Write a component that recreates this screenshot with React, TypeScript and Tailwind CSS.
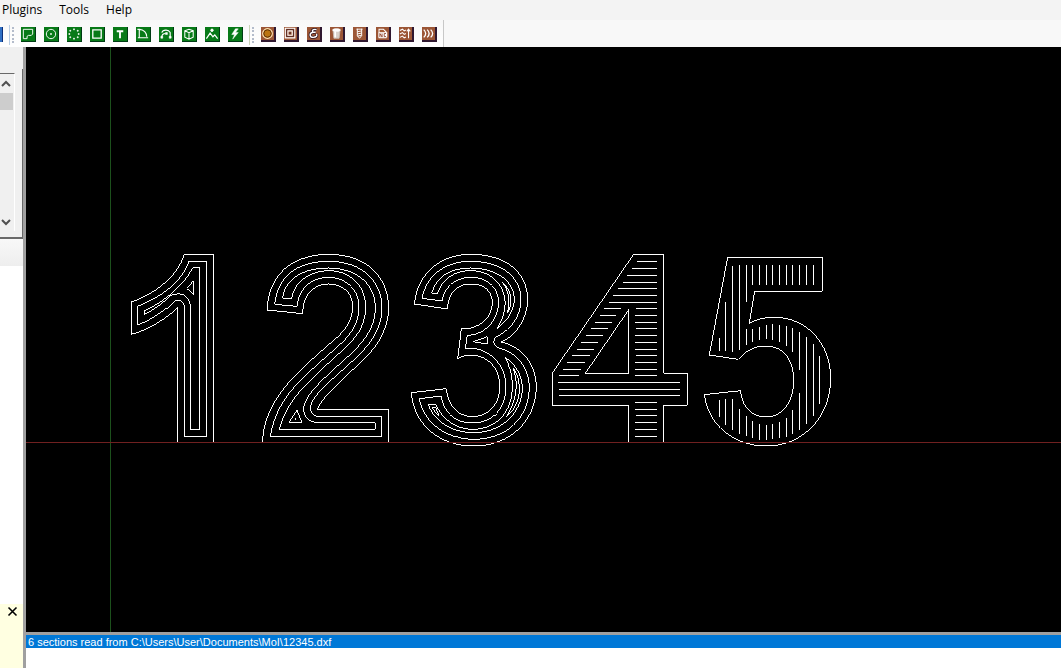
import * as React from "react";

const GREEN_TOOLS: { label: string; icon: React.ReactNode }[] = [
  { label: "Polyline", icon: <path d="M2.5 2.5h10v5l-1.5 1.5h-3l-1.5 1v2.5h-4z" /> },
  {
    label: "Circle",
    icon: (
      <>
        <circle cx="7.5" cy="7.5" r="5" />
        <path d="M7 7h1v1H7z" />
      </>
    ),
  },
  {
    label: "Point list",
    icon: (
      <path
        d="M7 2h1v1H7zM11 3.5h1v1h-1zM12 7h1v1h-1zM11 10.5h1v1h-1zM7 12h1v1H7zM3 10.5h1v1H3zM2 7h1v1H2zM3 3.5h1v1H3z"
        fill="white"
        strokeWidth="0.8"
      />
    ),
  },
  { label: "Rectangle", icon: <path d="M3 3h9v9H3z" strokeWidth="1.4" /> },
  { label: "Text", icon: <path d="M4 4.5h7M7.5 4.5V12" strokeWidth="2" /> },
  { label: "Region", icon: <path d="M3.5 12V2.5c5 0 8 4 8 8M2 11.5h11M1.5 2.5h3" strokeWidth="1.2" /> },
  {
    label: "Arc",
    icon: (
      <>
        <path d="M3 6c1-3 7-4 9 0v5M3 11c0-3 2-4 4-4" strokeWidth="1.2" />
        <path d="M2 10h2v2H2zM7 6h2v2H7zM11 10h2v2h-2z" fill="white" strokeWidth="0.6" />
      </>
    ),
  },
  { label: "Surface", icon: <path d="M3 4l4.5-1.5L12 4v7l-4.5 2L3 11zM3 4l4.5 2L12 4M7.5 6v7" strokeWidth="1.1" /> },
  {
    label: "Bitmap",
    icon: (
      <>
        <path d="M1.5 12.5l4-6 3 4 2-2 3 4" strokeWidth="1.3" />
        <circle cx="7.5" cy="3.5" r="1.3" fill="white" />
      </>
    ),
  },
  { label: "Script", icon: <path d="M8 2L4 8h3l-2 5 6-7H8l3-4z" fill="white" strokeWidth="0.5" /> },
];

const BROWN_TOOLS: { label: string; icon: React.ReactNode }[] = [
  {
    label: "Profile",
    icon: (
      <>
        <circle cx="7.5" cy="7.5" r="5.6" stroke="#ffe6b0" strokeWidth="1.3" />
        <circle cx="7.5" cy="7.5" r="4.2" fill="#bb7412" stroke="#5a3000" />
      </>
    ),
  },
  {
    label: "Pocket",
    icon: (
      <>
        <path d="M1.5 1.5h11v11h-11zM4.5 4.5h5v5h-5z" strokeWidth="1.3" />
        <path d="M3 3h8v8H3zM6.5 6.5h1v1h-1z" stroke="#4a2020" strokeWidth="0.9" />
      </>
    ),
  },
  {
    label: "Engrave",
    icon: (
      <>
        <path d="M11 3c-4-1-6 1-4 3h3H7c-5 1-4 6 0 6 4 0 5-2 4-4" stroke="#2c1420" strokeWidth="3.4" />
        <path d="M11 3c-4-1-6 1-4 3h3H7c-5 1-4 6 0 6 4 0 5-2 4-4" strokeWidth="1.6" />
      </>
    ),
  },
  {
    label: "3D Profile",
    icon: (
      <>
        <path d="M3.5 4l1 9h6l1-9z" fill="#d9d2cb" stroke="#c9beb6" />
        <path d="M6 5v7" stroke="#fff" strokeWidth="2" />
        <ellipse cx="7.5" cy="3.5" rx="4.5" ry="1.5" fill="#fff" />
      </>
    ),
  },
  { label: "Drill", icon: <path d="M4 2.5h7M5 2v8l2.5 3 2.5-3V2M5 5.5l5-1M5 8l5-1M5 10.5l5-1" strokeWidth="1.1" /> },
  {
    label: "NC File",
    icon: (
      <>
        <path d="M3.5 2.5h5l3 3v7h-8z" fill="#a35a34" strokeWidth="1.2" />
        <path d="M3 6h10v6H3z" fill="white" stroke="none" />
        <path d="M4.5 11.5v-4l2.5 4v-4M11.5 7.5h-2v3.5h2" stroke="#8a3c24" />
      </>
    ),
  },
  {
    label: "Lathe",
    icon: <path d="M1 4l3-1.5 2 2 2-1M1 8l3-1.5 2 2 2-1M1 12l3-1.5 2 2 2-1M11 13V3M9 5l2-2.5L13 5" strokeWidth="1.2" />,
  },
  { label: "V-Engrave", icon: <path d="M2 3c3 3 3 6 0 9M6 3c3 3 3 6 0 9M10 3c3 3 3 6 0 9" strokeWidth="1.5" /> },
];

// Hatch segments, each [from, to, position] in drawing units (three to a pixel)
const FOUR_HATCH = [
  [276, 336, 50], [262, 336, 71], [247, 336, 91], [235, 336, 112], [220, 336, 130],
  [205, 336, 152], [192, 336, 172], [178, 228, 190], [273, 336, 190], [165, 213, 211],
  [270, 336, 211], [150, 201, 232], [270, 336, 232], [138, 189, 252], [273, 336, 252],
  [124, 174, 271], [270, 336, 271], [109, 159, 292], [270, 336, 292], [97, 147, 313],
  [270, 336, 313], [82, 135, 331], [273, 336, 331], [67, 120, 352], [270, 336, 352],
  [54, 108, 373], [270, 336, 373], [42, 102, 391], [270, 336, 391], [39, 405, 412],
  [42, 405, 433], [42, 405, 453], [270, 336, 472], [270, 336, 493], [273, 336, 513],
  [270, 336, 532], [270, 336, 553], [270, 336, 574],
];

const FIVE_HATCH = [
  [279, 318, 73], [171, 318, 93], [63, 321, 112], [60, 315, 133], [60, 171, 154],
  [60, 120, 172], [60, 120, 193], [60, 120, 214], [60, 120, 232], [60, 120, 253],
  [60, 120, 274], [60, 120, 294], [60, 120, 313], [60, 120, 334], [60, 120, 355],
  [252, 300, 154], [252, 291, 172], [246, 285, 193], [240, 282, 214], [237, 285, 232],
  [240, 291, 253], [243, 303, 274], [249, 321, 294], [261, 375, 313], [276, 537, 334],
  [297, 513, 355], [333, 477, 373], [465, 516, 73], [462, 540, 93], [462, 555, 112],
  [492, 567, 133], [513, 573, 154], [528, 579, 172], [537, 585, 193], [540, 585, 214],
  [537, 582, 232], [531, 579, 253], [519, 576, 274], [495, 567, 294], [444, 555, 313],
];

const MENU = ["Plugins", "Tools", "Help"];

export default function App() {
  return (
    <div className="flex h-screen flex-col overflow-hidden bg-[#f0f0f0] font-['Open_Sans','Noto_Sans',sans-serif] text-xs text-black">
      <nav className="flex h-5 shrink-0 items-center gap-[17px] bg-[#f3f3f3] pl-[2px]">
        {MENU.map((item) => (
          <button key={item} type="button" className="leading-5">
            {item}
          </button>
        ))}
      </nav>

      <Toolbar />

      <div className="flex min-h-0 flex-1">
        <SidePanel />
        <main className="flex min-w-0 flex-1 flex-col">
          <Viewport />
          <div className="h-[3px] shrink-0 bg-[#a0a0a0]" />
          <div className="h-[33px] shrink-0 bg-white">
            <p className="h-[13px] bg-[#0078d7] pl-[2px] font-['Liberation_Sans',sans-serif] text-[11px] leading-[14px] whitespace-nowrap text-white">
              6 sections read from C:\Users\User\Documents\MoI\12345.dxf
            </p>
          </div>
        </main>
      </div>
    </div>
  );
}

function Toolbar() {
  return (
    <div className="flex h-[27px] shrink-0 items-center bg-[#f8f8f8]">
      <div className="flex h-full w-[444px] items-center border-r border-[#c8c8c8] bg-linear-to-b from-[#f8f8f8] to-white pt-[2px]">
        <button type="button" aria-label="Layers" className="h-[15px] w-[3px] border-r border-[#0c2f78] bg-[#2f6fc4]" />
        <div className="ml-[6px] h-5 border-l border-[#b8cce4]" />
        <Grip />
        <div className="ml-[7px] flex gap-2">
          {GREEN_TOOLS.map((tool) => (
            <button
              key={tool.label}
              type="button"
              aria-label={tool.label}
              className="size-[15px] border-r border-b border-[#003c14] bg-[#087a18]"
            >
              <Glyph>{tool.icon}</Glyph>
            </button>
          ))}
        </div>
        <div className="ml-[6px] h-5 border-l border-[#c9d3b8]" />
        <Grip />
        <div className="ml-[7px] flex gap-2">
          {BROWN_TOOLS.map((tool) => (
            <button
              key={tool.label}
              type="button"
              aria-label={tool.label}
              className="size-[15px] border-r-2 border-b-2 border-[#301830] bg-[#9c5636]"
            >
              <Glyph>{tool.icon}</Glyph>
            </button>
          ))}
        </div>
      </div>
    </div>
  );
}

function Grip() {
  return <div className="ml-[2px] h-4 border-l-2 border-dotted border-[#b4bccb]" />;
}

function Glyph({ children }: { children: React.ReactNode }) {
  return (
    <svg viewBox="0 0 15 15" className="block size-full" fill="none" stroke="white" aria-hidden="true">
      {children}
    </svg>
  );
}

function SidePanel() {
  return (
    <aside className="flex w-[26px] shrink-0 flex-col border-r-[3px] border-[#a0a0a0] bg-white">
      <div className="h-[22px] shrink-0 bg-[#f0f0f0]" />
      <div className="flex h-[170px] shrink-0 border-r border-b-2 border-[#696969] bg-[#f0f0f0] pt-1 pb-[6px]">
        <div className="flex w-[15px] flex-col items-start border-t border-r border-t-[#696969] border-r-white">
          <button type="button" aria-label="Scroll up" className="h-[19px] w-3">
            <Chevron d="M2 12l4-4 4 4" />
          </button>
          <div className="h-[17px] w-[13px] bg-[#cdcdcd]" />
          <div className="flex-1" />
          <button type="button" aria-label="Scroll down" className="h-[19px] w-3">
            <Chevron d="M2 8l4 4 4-4" />
          </button>
        </div>
      </div>
      <div className="h-[27px] shrink-0 bg-linear-to-b from-[#f8f8f8] to-[#eeeeee]" />
      <div className="flex-1" />
      <div className="flex h-16 shrink-0 items-start justify-end bg-[#ffffe1] pt-[2px] pr-[5px]">
        <button type="button" aria-label="Close" className="size-[11px]">
          <svg viewBox="0 0 11 11" className="size-full" stroke="black" strokeWidth="1.6" aria-hidden="true">
            <path d="M1.5 1.5l8 8M9.500 1.500l-8 8" />
          </svg>
        </button>
      </div>
    </aside>
  );
}

function Chevron({ d }: { d: string }) {
  return (
    <svg viewBox="0 0 12 19" className="size-full" fill="none" stroke="#505050" strokeWidth="2" aria-hidden="true">
      <path d={d} />
    </svg>
  );
}

// Drawing area: axes plus the toolpaths of the five shapes
function Viewport() {
  return (
    <div className="min-h-0 flex-1 bg-black">
      <svg
        className="block size-full"
        fill="none"
        stroke="white"
        strokeWidth="3"
        shapeRendering="crispEdges"
        role="img"
        aria-label="12345.dxf toolpaths"
      >
        <path d="M84.5 0V2000" stroke="#1c501c" strokeWidth="1" />

        <g transform="translate(94 198) scale(0.33333)">
          <path d="M173 592V188C140 220 85 255 34 268V171C110 145 175 90 193 28H281V592" />
          <path d="M52 184C115 160 185 115 207 49H260V574H193V190C193 165 175 160 160 172C130 198 95 225 52 240Z" />
          <path d="M73 197C120 178 190 125 218 69H240V553H211V185C208 148 180 140 152 152C130 172 110 190 73 208Z" />
          <path d="M221 107V148L200 130Z" />
        </g>

        <g transform="translate(232 198) scale(0.33333)">
          <path d="M14 592C14 540 35 480 90 415C150 350 200 310 240 275C270 245 285 220 284 180C282 140 250 117 212 117C165 118 135 150 134 206L27 195C32 90 100 28 212 28C325 28 392 95 392 190C390 265 345 320 300 360C250 405 195 455 177 493H392V592" />
          <path d="M37 574C45 525 65 475 110 425C160 370 225 320 260 285C290 252 303 225 303 180C300 130 260 97 212 97C155 98 122 135 117 184L50 178C58 100 110 49 212 49C315 49 372 110 372 190C370 260 330 305 287 345C230 398 160 450 157 488C157 502 165 514 180 514H371V574Z" />
          <path d="M64 553C75 510 95 475 125 440C175 383 235 335 270 300C305 265 323 235 323 180C320 120 275 77 212 77C150 78 108 115 101 160H74C80 105 130 69 212 69C300 70 352 120 352 188C352 250 315 292 275 330C215 385 140 445 137 490C137 515 155 533 180 533H352V553Z" />
          <path d="M117 496L132 532H93ZM113 520V525" />
        </g>

        <g transform="translate(379 198) scale(0.33333)">
          <path d="M28 177C38 85 105 28 198 28C300 28 368 80 368 165C366 225 330 275 287 291C355 305 394 360 394 430C390 530 315 603 205 603C100 603 25 535 19 443L124 431C130 485 160 515 205 515C250 513 284 480 284 425C284 365 245 330 195 330C180 331 170 335 158 341L169 251C230 252 262 215 262 170C260 140 240 117 198 117C155 117 130 145 127 192Z" />
          <path d="M51 160C65 90 120 49 198 49C290 50 348 95 348 165C346 215 320 250 280 273C262 280 262 300 280 308C340 325 372 370 373 430C370 520 305 583 205 583C120 582 55 530 43 461L108 453C118 505 150 534 205 534C262 533 303 490 303 425C302 360 255 310 195 310H181L187 271C240 270 281 225 281 170C278 125 245 97 198 97C145 98 118 130 111 168Z" />
          <path d="M80 145H98C112 100 150 77 198 77C255 77 295 115 300 165C302 195 292 225 277 250C310 225 328 195 328 160C325 105 270 69 198 69C135 69 95 95 80 145Z" />
          <path d="M292 112C310 135 318 165 307 205C322 180 325 140 292 112Z" />
          <path d="M70 480L92 477C115 530 160 553 205 553C275 552 322 500 322 425C322 390 315 360 300 337C335 360 352 395 352 430C350 505 290 563 205 563C140 562 90 530 70 480Z" />
          <path d="M325 370C338 410 340 460 303 517C335 490 345 455 343 425C341 400 335 385 325 370Z" />
          <path d="M82 487C88 500 95 508 102 512L92 487Z" />
          <path d="M205 290L247 275V297Z" />
        </g>

        <g transform="translate(519 198) scale(0.33333)">
          <path d="M252 592V481H22V384L266 28H356V385H427V481H356V592" />
          <path d="M252 193V385H121Z" />
          {FOUR_HATCH.map(([from, to, y]) => (
            <path key={`${from}-${y}`} d={`M${from} ${y}H${to}`} />
          ))}
        </g>

        <g transform="translate(669 198) scale(0.33333)">
          <path d="M98 37H382V139H179L163 235C185 222 210 217 238 217C335 217 407 295 407 400C407 520 320 603 215 603C115 603 40 540 28 449L137 437C140 485 170 516 215 516C265 514 296 470 296 405C296 345 265 303 213 303C175 303 150 320 130 343L43 330Z" />
          {FIVE_HATCH.map(([from, to, x]) => (
            <path key={`${x}-${from}`} d={`M${x} ${from}V${to}`} />
          ))}
        </g>

        <path d="M0 395.5H8000" stroke="#702020" strokeWidth="1" />
      </svg>
    </div>
  );
}
